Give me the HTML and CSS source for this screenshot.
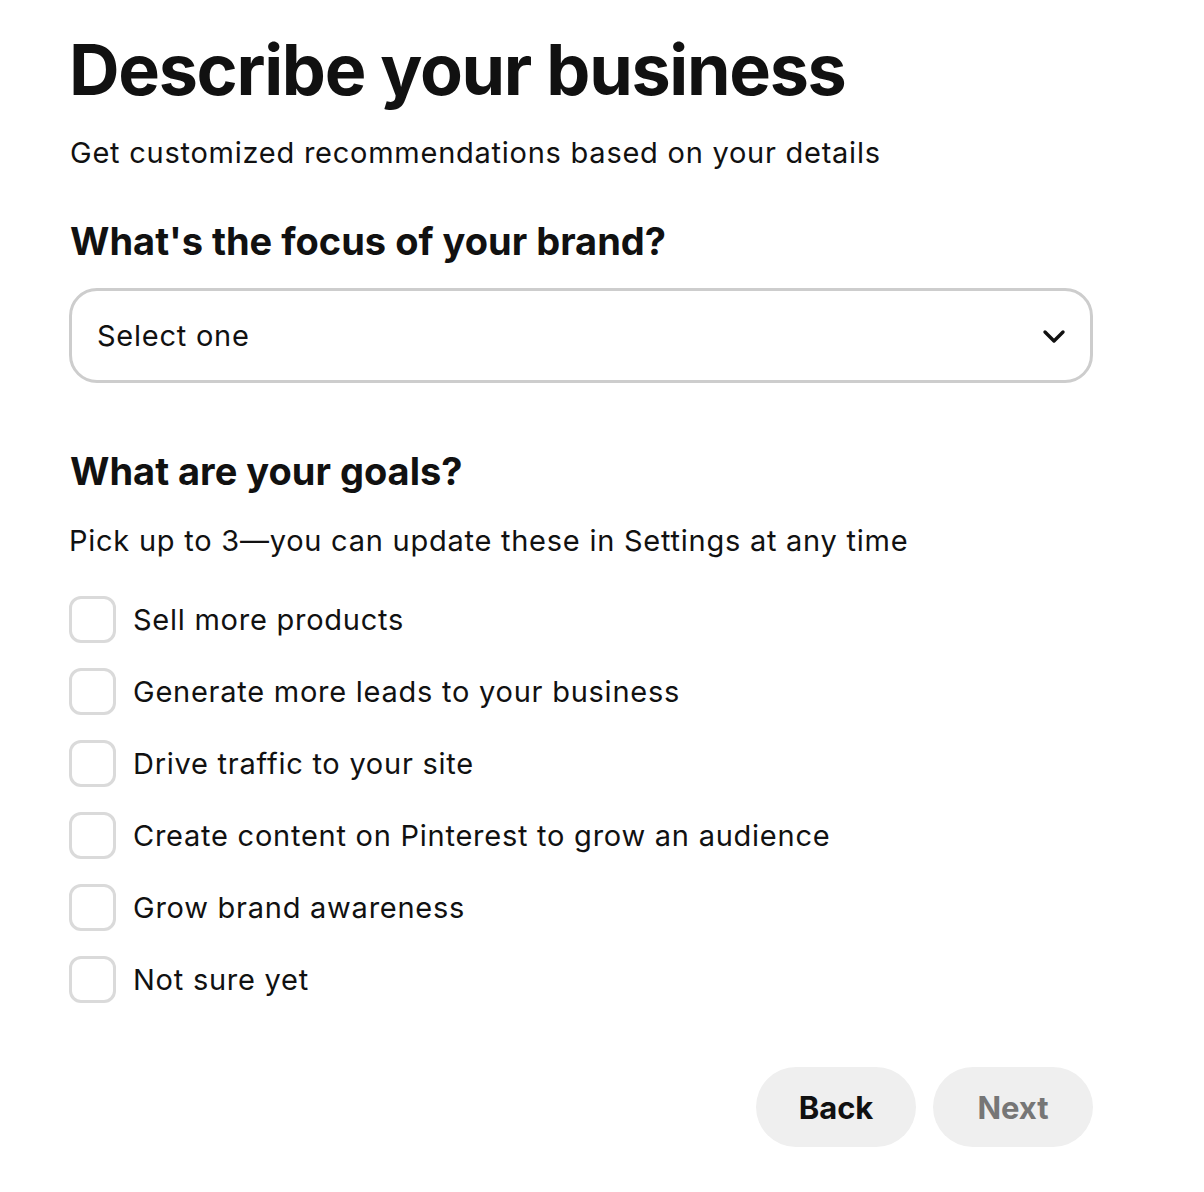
FILE: index.html
```html
<!DOCTYPE html>
<html lang="en">
<head>
    <meta charset="UTF-8">
    <meta name="viewport" content="width=device-width, initial-scale=1.0">
    <title>Describe your business</title>
    <link rel="stylesheet" href="styles.css">
</head>
<body>
    <main class="page">
        <h1 class="title">Describe your business</h1>
        <p class="subtitle">Get customized recommendations based on your details</p>

        <h2 class="section-title">What's the focus of your brand?</h2>
        <div class="select">
            <span class="select-label">Select one</span>
            <svg class="chevron" width="24" height="24" viewBox="0 0 24 24">
                <path d="M3 8 L12 17 L21 8" fill="none" stroke="#111" stroke-width="3.4" stroke-linecap="round" stroke-linejoin="round"/>
            </svg>
        </div>

        <h2 class="section-title goals-title">What are your goals?</h2>
        <p class="hint">Pick up to 3—you can update these in Settings at any time</p>

        <ul class="goals">
            <li class="goal"><span class="box"></span>Sell more products</li>
            <li class="goal"><span class="box"></span>Generate more leads to your business</li>
            <li class="goal"><span class="box"></span>Drive traffic to your site</li>
            <li class="goal"><span class="box"></span>Create content on Pinterest to grow an audience</li>
            <li class="goal"><span class="box"></span>Grow brand awareness</li>
            <li class="goal"><span class="box"></span>Not sure yet</li>
        </ul>

        <div class="actions">
            <button class="btn">Back</button>
            <button class="btn btn-disabled">Next</button>
        </div>
    </main>
</body>
</html>
```

FILE: styles.css
```css
body {
    margin: 0;
    padding: 0;
    background-color: #fff;
    font-family: Inter, "Helvetica Neue", Arial, sans-serif;
    color: #111;
}

.page {
    width: 1024px;
    padding: 28px 0 0 69px;
}

.title {
    font-size: 70px;
    font-weight: 700;
    letter-spacing: -1.3px;
    line-height: 84px;
    margin: 0;
}

.subtitle {
    font-size: 29px;
    line-height: 36px;
    margin: 23px 0 0 1px;
    letter-spacing: 0.75px;
}

.section-title {
    font-size: 38px;
    font-weight: 700;
    letter-spacing: 0;
    line-height: 44px;
    margin: 48px 0 0 1px;
}

.select {
    display: flex;
    align-items: center;
    justify-content: space-between;
    box-sizing: border-box;
    height: 95px;
    margin-top: 25px;
    padding: 0 24px 0 25px;
    border: 3px solid #cdcdcd;
    border-radius: 28px;
}

.select-label {
    font-size: 29px;
    letter-spacing: 0.75px;
}

.goals-title {
    margin-top: 66px;
}

.hint {
    font-size: 29px;
    line-height: 36px;
    margin: 30px 0 0 0;
    letter-spacing: 0.75px;
}

.goals {
    list-style: none;
    margin: 24px 0 0 0;
    padding: 0;
}

.goal {
    display: flex;
    align-items: center;
    height: 72px;
    font-size: 29px;
    letter-spacing: 0.75px;
}

.box {
    box-sizing: border-box;
    width: 47px;
    height: 47px;
    margin-right: 17px;
    border: 3px solid #dadada;
    border-radius: 12px;
}

.actions {
    display: flex;
    justify-content: flex-end;
    gap: 17px;
    margin-top: 52px;
}

.btn {
    width: 160px;
    height: 80px;
    border: none;
    border-radius: 40px;
    background-color: #efefef;
    font-family: inherit;
    font-size: 31px;
    font-weight: 700;
    color: #111;
}

.btn-disabled {
    color: #767676;
}
```
